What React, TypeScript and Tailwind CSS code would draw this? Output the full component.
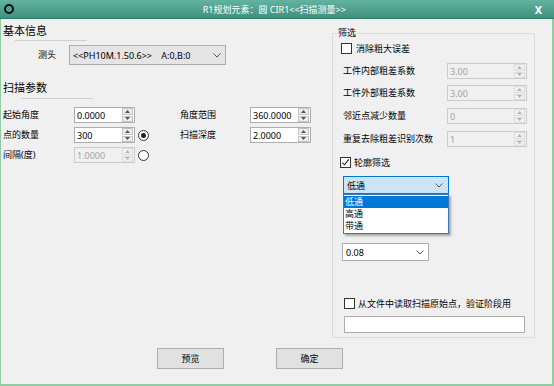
const Tri = ({ up, color }: { up?: boolean; color: string }) => (
  <svg width="5" height="3" viewBox="0 0 5 3">
    <path d={up ? 'M0 3L2.5 0L5 3Z' : 'M0 0L5 0L2.5 3Z'} fill={color} />
  </svg>
);

const Chevron = () => (
  <svg width="8" height="5" viewBox="0 0 8 5">
    <path d="M0.5 0.5L4 4L7.5 0.5" stroke="#555555" strokeWidth="1" fill="none" />
  </svg>
);

function Spin({ value, className, disabled }: { value: string; className: string; disabled?: boolean }) {
  return (
    <div
      className={`flex h-[16px] items-center border ${
        disabled ? 'border-[#cccccc] text-[#a3a3a3]' : 'border-[#adadad] bg-white text-black'
      } ${className}`}
    >
      <span className="flex-1 pl-[2px] text-[9px] leading-none">{value}</span>
      <div className="mr-[1px] flex h-[14px] w-[11px] flex-col gap-px">
        <div
          className={`flex flex-1 items-center justify-center border ${
            disabled ? 'border-[#dcdcdc]' : 'border-[#c4c4c4] bg-[#ececec]'
          }`}
        >
          <Tri up color={disabled ? '#b5b5b5' : '#555555'} />
        </div>
        <div
          className={`flex flex-1 items-center justify-center border ${
            disabled ? 'border-[#dcdcdc]' : 'border-[#c4c4c4] bg-[#ececec]'
          }`}
        >
          <Tri color={disabled ? '#b5b5b5' : '#555555'} />
        </div>
      </div>
    </div>
  );
}

function Check({ checked }: { checked?: boolean }) {
  return (
    <div className="flex h-[11px] w-[11px] shrink-0 items-center justify-center border border-[#333333] bg-white">
      {checked && (
        <svg width="9" height="9" viewBox="0 0 9 9">
          <path d="M1.3 4.6L3.5 6.8L7.8 1.4" stroke="#222222" strokeWidth="1.1" fill="none" />
        </svg>
      )}
    </div>
  );
}

function Radio({ checked }: { checked?: boolean }) {
  return (
    <div className="ml-[3px] flex h-[11px] w-[11px] items-center justify-center rounded-full border border-[#333333] bg-white">
      {checked && <div className="h-[5px] w-[5px] rounded-full bg-[#222222]" />}
    </div>
  );
}

export default function App() {
  return (
    <div className="flex h-[386px] w-[554px] flex-col bg-[#f0f0f0] font-['Noto_Sans','Noto_Sans_CJK_SC',sans-serif] text-[9px] text-black">
      {/* title bar */}
      <div className="relative flex h-[19px] shrink-0 items-center border-b border-[#2f7a68] bg-gradient-to-b from-[#62b3a0] to-[#3f917e]">
        <div className="ml-[4px] h-[10px] w-[10px] rounded-full border-2 border-[#111111]" />
        <div className="flex-1 text-center text-[9px] leading-none text-white">R1规划元素：圆 CIR1&lt;&lt;扫描测量&gt;&gt;</div>
        <div className="mr-[12px] text-[11px] font-bold leading-none text-white">X</div>
      </div>

      <div className="flex flex-1 flex-col border-b-2 border-l border-r-2 border-[#93cba4]">
        <div className="flex">
          {/* left panel */}
          <div className="flex w-[331px] flex-col">
            <div className="mt-[5px] h-[14px] pl-[2px] text-[11px] leading-[14px]">基本信息</div>
            <div className="ml-[14px] mt-[2px] h-px w-[72px] bg-[#cfcfcf]" />
            <div className="mt-[4px] flex h-[20px] items-center">
              <span className="ml-[37px] w-[31px]">测头</span>
              <div className="flex h-[20px] w-[157px] items-center border border-[#acacac] bg-[#e5e5e5] pl-[3px] pr-[4px]">
                <span className="flex-1 text-[9px] leading-none">&lt;&lt;PH10M.1.50.6&gt;&gt;&nbsp;&nbsp;&nbsp; A:0,B:0</span>
                <Chevron />
              </div>
            </div>

            <div className="mt-[16px] h-[14px] pl-[2px] text-[11px] leading-[14px]">扫描参数</div>
            <div className="ml-[20px] mt-[3px] h-px w-[72px] bg-[#cfcfcf]" />

            <div className="mt-[8px] flex h-[16px] items-center">
              <span className="w-[73px] pl-[2px]">起始角度</span>
              <Spin value="0.0000" className="w-[61px]" />
              <div className="ml-[3px] w-[11px]" />
              <span className="ml-[31px] w-[70px]">角度范围</span>
              <Spin value="360.0000" className="w-[61px]" />
            </div>
            <div className="mt-[4px] flex h-[16px] items-center">
              <span className="w-[73px] pl-[2px]">点的数量</span>
              <Spin value="300" className="w-[61px]" />
              <Radio checked />
              <span className="ml-[31px] w-[70px]">扫描深度</span>
              <Spin value="2.0000" className="w-[61px]" />
            </div>
            <div className="mt-[4px] flex h-[16px] items-center">
              <span className="w-[73px] pl-[2px]">间隔(度)</span>
              <Spin value="1.0000" className="w-[61px]" disabled />
              <Radio />
            </div>
          </div>

          {/* filter group */}
          <div className="relative mt-[14px] flex h-[305px] w-[203px] flex-col border border-[#dcdcdc]">
            <span className="absolute -top-[7px] left-[4px] bg-[#f0f0f0] px-px leading-[12px]">筛选</span>
            <div className="mt-[9px] flex h-[11px] items-center pl-[8px]">
              <Check />
              <span className="ml-[4px]">消除粗大误差</span>
            </div>
            <div className="mt-[9px] flex h-[16px] items-center pl-[10px]">
              <span className="w-[104px]">工件内部粗差系数</span>
              <Spin value="3.00" className="w-[80px]" disabled />
            </div>
            <div className="mt-[6px] flex h-[16px] items-center pl-[10px]">
              <span className="w-[104px]">工件外部粗差系数</span>
              <Spin value="3.00" className="w-[80px]" disabled />
            </div>
            <div className="mt-[7px] flex h-[16px] items-center pl-[10px]">
              <span className="w-[104px]">邻近点减少数量</span>
              <Spin value="0" className="w-[80px]" disabled />
            </div>
            <div className="mt-[7px] flex h-[16px] items-center pl-[10px]">
              <span className="w-[104px]">重复去除粗差识别次数</span>
              <Spin value="1" className="w-[80px]" disabled />
            </div>
            <div className="mt-[10px] flex h-[11px] items-center pl-[7px]">
              <Check checked />
              <span className="ml-[3px]">轮廓筛选</span>
            </div>
            <div className="relative ml-[10px] mt-[8px] flex h-[18px] w-[106px] items-center border border-[#0078d7] bg-[#cce4f7] pl-[3px] pr-[5px]">
              <span className="flex-1 leading-none">低通</span>
              <Chevron />
              <div className="absolute -left-px top-[17px] z-10 flex w-[106px] flex-col border border-[#3b78b5] bg-white py-px shadow-[2px_2px_2px_rgba(0,0,0,0.3)]">
                <div className="h-[12px] bg-[#0078d7] pl-px leading-[12px] text-white">低通</div>
                <div className="h-[12px] pl-px leading-[12px]">高通</div>
                <div className="h-[12px] pl-px leading-[12px]">带通</div>
              </div>
            </div>
            <div className="ml-[9px] mt-[49px] flex h-[18px] w-[87px] items-center border border-[#adadad] bg-white pl-[3px] pr-[4px]">
              <span className="flex-1 leading-none">0.08</span>
              <Chevron />
            </div>
            <div className="mt-[37px] flex h-[11px] items-center pl-[11px]">
              <Check />
              <span className="ml-[3px]">从文件中读取扫描原始点，验证阶段用</span>
            </div>
            <div className="ml-[11px] mt-[7px] h-[17px] w-[181px] border border-[#adadad] bg-white" />
          </div>
        </div>

        {/* buttons */}
        <div className="mt-[10px] flex gap-[52px] pl-[156px]">
          <button className="h-[21px] w-[67px] border border-[#adadad] bg-[#e1e1e1] text-[9px]">预览</button>
          <button className="h-[21px] w-[67px] border border-[#adadad] bg-[#e1e1e1] text-[9px]">确定</button>
        </div>
      </div>
    </div>
  );
}
